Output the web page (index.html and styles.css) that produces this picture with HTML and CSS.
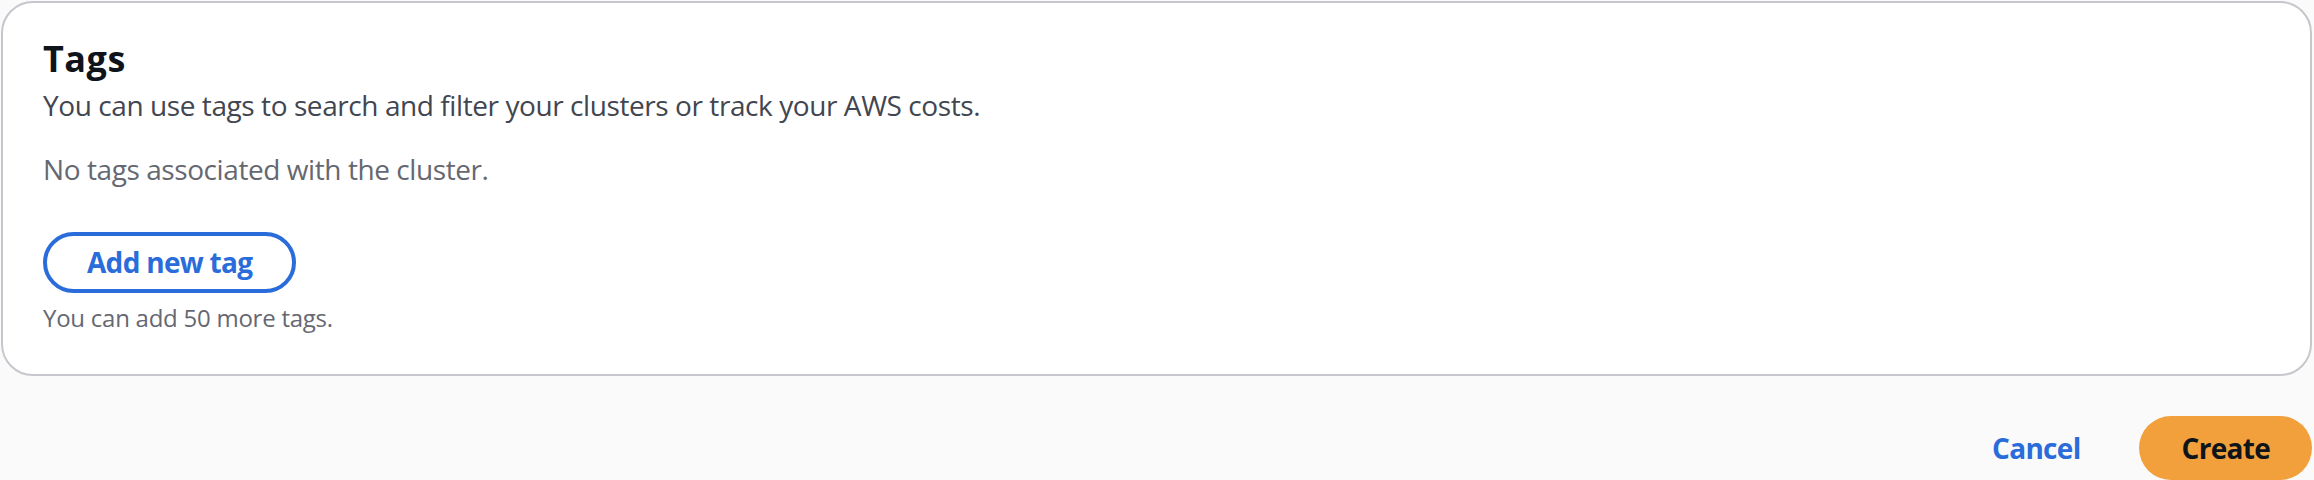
FILE: index.html
```html
<!DOCTYPE html>
<html lang="en">
<head>
<meta charset="utf-8">
<title>Tags</title>
<link rel="stylesheet" href="styles.css">
</head>
<body>
<main class="page">
  <section class="card">
    <header class="card-header">
      <h2 class="title">Tags</h2>
      <p class="description">You can use tags to search and filter your clusters or track your AWS costs.</p>
    </header>
    <p class="empty">No tags associated with the cluster.</p>
    <button class="btn-normal" type="button">Add new tag</button>
    <p class="constraint">You can add 50 more tags.</p>
  </section>
  <div class="actions">
    <button class="btn-link" type="button">Cancel</button>
    <button class="btn-primary" type="button">Create</button>
  </div>
</main>
</body>
</html>
```

FILE: styles.css
```css
* { box-sizing: border-box; }

html, body {
  margin: 0;
  padding: 0;
  background: #fafafa;
  font-family: "Open Sans", "Noto Sans", sans-serif;
  color: #0f141a;
}

.page {
  display: flex;
  flex-direction: column;
  padding: 1px 2px 0 1px;
}

.card {
  background: #ffffff;
  border: 2px solid #c6c6cd;
  border-radius: 32px;
  padding: 34px 40px 40px 40px;
  display: flex;
  flex-direction: column;
  align-items: flex-start;
}

.card-header {
  display: flex;
  flex-direction: column;
  gap: 4px;
}

.title {
  margin: 0;
  font-size: 36px;
  line-height: 44px;
  font-weight: 700;
  letter-spacing: 0.5px;
  color: #0f141a;
}

.description {
  margin: 0;
  font-size: 28px;
  line-height: 40px;
  letter-spacing: -0.42px;
  color: #424650;
}

.empty {
  margin: 24px 0 0 0;
  font-size: 28px;
  line-height: 40px;
  letter-spacing: -0.42px;
  color: #656871;
}

.btn-normal {
  margin-top: 43px;
  font-family: inherit;
  font-size: 28px;
  font-weight: 700;
  line-height: 53px;
  letter-spacing: -0.7px;
  padding: 0 40px;
  border: 4px solid #2b6cdb;
  border-radius: 40px;
  background: #ffffff;
  color: #2b6cdb;
}

.constraint {
  margin: 9px 0 0 0;
  font-size: 24px;
  line-height: 32px;
  letter-spacing: -0.25px;
  color: #656871;
}

.actions {
  display: flex;
  justify-content: flex-end;
  align-items: center;
  gap: 17px;
  margin-top: 40px;
}

.btn-link,
.btn-primary {
  font-family: inherit;
  font-size: 28px;
  font-weight: 700;
  line-height: 56px;
  letter-spacing: -0.7px;
  border: 4px solid transparent;
  border-radius: 40px;
  padding: 0 38px;
}

.btn-link {
  background: transparent;
  color: #2b6cdb;
}

.btn-primary {
  background: #f2a03b;
  color: #0f141a;
}
```
